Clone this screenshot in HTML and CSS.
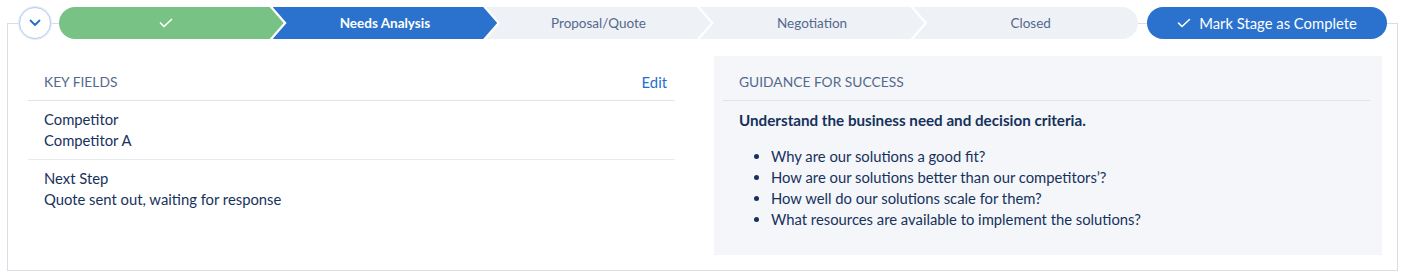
FILE: index.html
```html
<!DOCTYPE html>
<html lang="en">
<head>
<meta charset="utf-8">
<title>Path</title>
<link rel="stylesheet" href="styles.css">
</head>
<body>
<div class="page">
  <div class="path-header">
    <button class="toggle" aria-label="Collapse">
      <svg width="12" height="8" viewBox="0 0 12 8"><path d="M1.5 1.5 L6 6 L10.5 1.5" fill="none" stroke="#1f6fd0" stroke-width="1.8" stroke-linecap="round" stroke-linejoin="round"/></svg>
    </button>
    <div class="path">
      <div class="stage complete first">
        <svg class="stage-icon" width="14" height="10" viewBox="0 0 14 10"><path d="M1.5 5 L5 8.5 L12.5 1.5" fill="none" stroke="#fff" stroke-width="1.7" stroke-linecap="round" stroke-linejoin="round"/></svg>
      </div>
      <div class="stage current"><span>Needs Analysis</span></div>
      <div class="stage"><span>Proposal/Quote</span></div>
      <div class="stage"><span>Negotiation</span></div>
      <div class="stage last"><span class="last-label">Closed</span></div>
    </div>
    <button class="mark">
      <svg width="14" height="10" viewBox="0 0 14 10"><path d="M1.5 5 L5 8.5 L12.5 1.5" fill="none" stroke="#fff" stroke-width="1.6" stroke-linecap="round" stroke-linejoin="round"/></svg>
      <span>Mark Stage as Complete</span>
    </button>
  </div>
  <div class="card">
    <div class="columns">
      <section class="key-fields">
        <div class="sec-head">
          <span class="sec-title">KEY FIELDS</span>
          <a class="edit" href="#">Edit</a>
        </div>
        <div class="field">
          <div>Competitor</div>
          <div>Competitor A</div>
        </div>
        <div class="field">
          <div>Next Step</div>
          <div>Quote sent out, waiting for response</div>
        </div>
      </section>
      <section class="guidance">
        <div class="sec-head">
          <span class="sec-title">GUIDANCE FOR SUCCESS</span>
        </div>
        <div class="guide-body">
          <p class="lead">Understand the business need and decision criteria.</p>
          <ul>
            <li>Why are our solutions a good fit?</li>
            <li>How are our solutions better than our competitors’?</li>
            <li>How well do our solutions scale for them?</li>
            <li>What resources are available to implement the solutions?</li>
          </ul>
        </div>
      </section>
    </div>
  </div>
</div>
</body>
</html>
```
FILE: styles.css
```css
* { box-sizing: border-box; }
html, body { margin: 0; padding: 0; background: #fff; }
body {
  font-family: Lato, "Open Sans", sans-serif;
  font-size: 14.8px;
  color: #16325c;
}
.page { padding: 7px 7px 0 7px; }

.path-header {
  position: relative;
  z-index: 1;
  display: flex;
  align-items: center;
  gap: 8px;
  height: 32px;
  padding-left: 12px;
  padding-right: 11px;
}
.toggle {
  width: 32px;
  height: 32px;
  flex: none;
  border-radius: 50%;
  border: 1px solid #b8cdea;
  box-shadow: 0 0 0 1px #e3ecf8;
  background: #fff;
  display: flex;
  align-items: center;
  justify-content: center;
  padding: 0;
}
.path {
  flex: 1;
  display: flex;
  height: 32px;
  border-radius: 16px;
  overflow: hidden;
  background: #fff;
}
.stage {
  flex: 1 1 0;
  min-width: 0;
  margin-left: -11px;
  height: 32px;
  display: flex;
  align-items: center;
  justify-content: center;
  background: #eef1f6;
  color: #54698d;
  font-size: 13.5px;
  clip-path: polygon(0 0, calc(100% - 14px) 0, 100% 50%, calc(100% - 14px) 100%, 0 100%, 14px 50%);
}
.stage.first {
  margin-left: 0;
  clip-path: polygon(0 0, calc(100% - 14px) 0, 100% 50%, calc(100% - 14px) 100%, 0 100%);
}
.stage-icon { margin-right: 10px; }
.stage.last {
  clip-path: polygon(0 0, 100% 0, 100% 100%, 0 100%, 14px 50%);
}
.last-label { margin-left: 10px; }
.stage.complete { background: #79c285; }
.stage.current {
  background: #2a72cd;
  color: #fff;
  font-weight: 700;
  font-size: 13.5px;
}
.mark {
  flex: none;
  width: 240px;
  height: 32px;
  margin-left: 1px;
  border-radius: 16px;
  border: none;
  background: #2a72cd;
  color: #fff;
  font-family: inherit;
  font-size: 14.8px;
  display: flex;
  align-items: center;
  justify-content: center;
  gap: 8px;
  padding: 0;
}

.card {
  margin-top: -16px;
  border: 1px solid #d8dde6;
  height: 248px;
  padding: 32px 15px 0 20px;
}
.columns {
  display: grid;
  grid-template-columns: 647px 668px;
  column-gap: 39px;
  align-items: start;
}
.sec-head {
  display: flex;
  justify-content: space-between;
  align-items: center;
  padding: 16px 8px 8px 16px;
  line-height: 20px;
  border-bottom: 1px solid #e0e4ea;
}
.sec-title {
  font-size: 13.8px;
  color: #54698d;
}
.edit {
  color: #1f6fcf;
  text-decoration: none;
  font-size: 14.8px;
}
.field {
  padding: 8px 16px;
  line-height: 21px;
  border-bottom: 1px solid #e8ebf0;
}
.field:last-child { border-bottom: none; }

.guidance {
  background: #f4f6f9;
  height: 199px;
  padding: 0 12px 0 9px;
}
.guide-body {
  padding: 9px 16px 0 16px;
  line-height: 21px;
}
.lead {
  margin: 0 0 15px 0;
  font-weight: 700;
  font-size: 15.2px;
}
.guide-body ul {
  margin: 0;
  padding-left: 32px;
}
```
